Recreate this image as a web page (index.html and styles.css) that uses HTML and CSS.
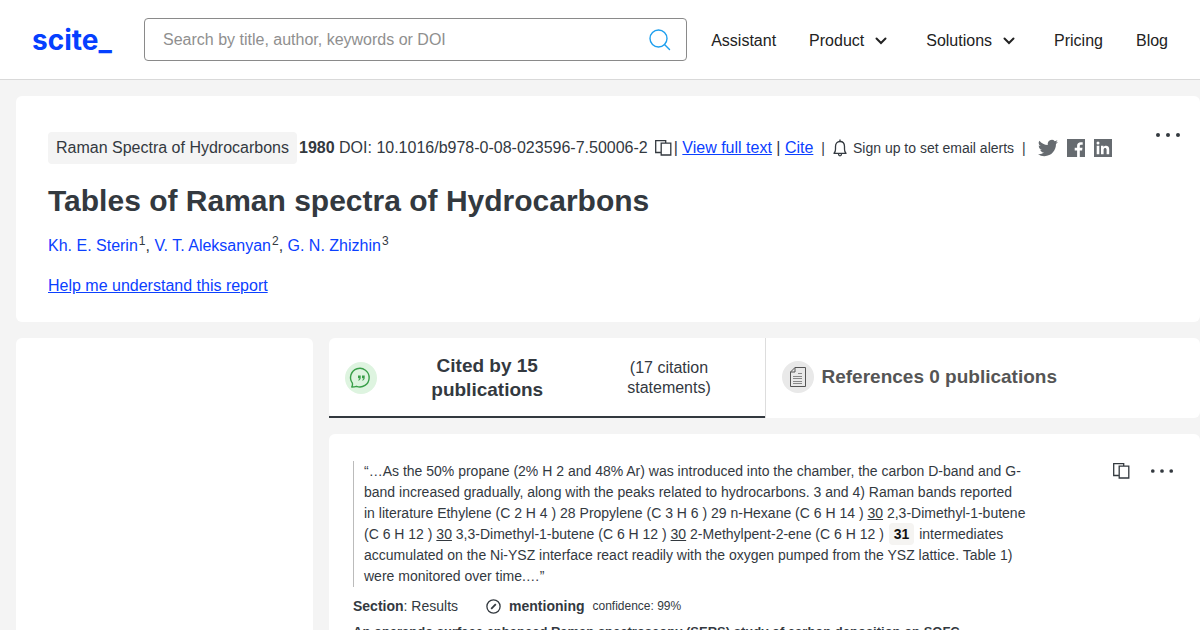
FILE: index.html
```html
<!DOCTYPE html>
<html lang="en">
<head>
<meta charset="utf-8">
<title>Tables of Raman spectra of Hydrocarbons - scite</title>
<link rel="stylesheet" href="styles.css">
</head>
<body>
<svg class="defs" width="0" height="0" aria-hidden="true">
  <symbol id="copy" viewBox="0 0 17 16"><path d="M5.500 12.500H.700V.700h10V3M6.200 3.200h9.600v11.800H6.200z" fill="none" stroke="currentColor" stroke-width="1.300"/></symbol>
  <symbol id="chevron" viewBox="0 0 12 8"><path d="M1.500 1.500 6 6l4.500-4.500" fill="none" stroke="currentColor" stroke-width="2" stroke-linecap="round"/></symbol>
  <symbol id="dots" viewBox="0 0 26 6"><g fill="currentColor"><circle cx="3" cy="3" r="2"/><circle cx="13" cy="3" r="2"/><circle cx="23" cy="3" r="2"/></g></symbol>
</svg>
<header class="header">
  <a class="logo" href="#">scite_</a>
  <form class="search">
    <input class="search-input" type="search" aria-label="Search" placeholder="Search by title, author, keywords or DOI">
    <button class="icon-button search-button" type="button" aria-label="Search"><svg width="22" height="22" viewBox="0 0 22 22" fill="none" stroke="#1e9fee" stroke-width="1.400"><circle cx="9.500" cy="9.500" r="8.500"/><path d="m15.500 15.500 5 5" stroke-linecap="round"/></svg></button>
  </form>
  <nav class="nav">
    <a class="nav-link" href="#">Assistant</a>
    <button class="nav-link nav-menu" type="button">Product<svg width="12" height="8"><use href="#chevron"/></svg></button>
    <button class="nav-link nav-menu" type="button">Solutions<svg width="12" height="8"><use href="#chevron"/></svg></button>
    <a class="nav-link" href="#">Pricing</a>
    <a class="nav-link" href="#">Blog</a>
  </nav>
</header>
<main class="page">
  <section class="card report">
    <div class="report-body">
      <div class="meta">
        <span class="journal">Raman Spectra of Hydrocarbons</span>
        <span class="doi"><b>1980</b> DOI: 10.1016/b978-0-08-023596-7.50006-2</span>
        <button class="icon-button copy-doi" type="button" aria-label="Copy DOI"><svg width="17" height="16"><use href="#copy"/></svg></button>
        <span class="links">| <a href="#">View full text</a> | <a href="#">Cite</a></span>
        <span class="bar">|</span>
        <button class="alerts" type="button"><svg width="14" height="18" viewBox="0 0 14 18" fill="none" stroke="currentColor" stroke-width="1.300"><path d="M1 14.300c1.200-1 1.500-2 1.500-4V7.500c0-3 1.700-5 4.500-5s4.500 2 4.500 5v2.800c0 2 .3 3 1.500 4z" stroke-linejoin="round"/><path d="M7 .6v2M5.500 15c.1 2.400 2.900 2.400 3 0"/></svg>Sign up to set email alerts</button>
        <span class="bar">|</span>
        <span class="social">
          <a href="#" aria-label="Twitter"><svg width="20" height="20" viewBox="0 0 24 24" fill="currentColor"><path d="M23.950 4.570a10 10 0 0 1-2.820.770 4.960 4.960 0 0 0 2.160-2.720c-.950.550-2 .960-3.130 1.180a4.920 4.920 0 0 0-8.380 4.480C7.690 8.090 4.070 6.130 1.640 3.160a4.930 4.930 0 0 0 1.520 6.570 4.900 4.900 0 0 1-2.230-.610v.060a4.920 4.920 0 0 0 3.950 4.830 5 5 0 0 1-2.210.080 4.940 4.940 0 0 0 4.600 3.420A9.870 9.870 0 0 1 0 19.540a13.990 13.990 0 0 0 7.560 2.210c9.050 0 14-7.500 14-13.980 0-.210 0-.420-.020-.630a9.940 9.940 0 0 0 2.410-2.570z"/></svg></a>
          <a href="#" aria-label="Facebook"><svg width="18" height="18" viewBox="0 0 18 18"><path fill="currentColor" d="M0 0h18v18h-5.200v-6.500h2.300l.4-2.700h-2.700V7.200c0-.8.300-1.400 1.500-1.400h1.400V3.300c-.3 0-1.100-.1-2-.1-2.200 0-3.600 1.200-3.600 3.600v2H7.700v2.700h2.400V18H0z"/></svg></a>
          <a href="#" aria-label="LinkedIn"><svg width="18" height="18" viewBox="0 0 18 18"><path fill="currentColor" d="M0 0h18v18H0z"/><path fill="#fff" d="M2.700 6.800h2.600v8.400H2.700zM7 6.800h2.500V8c1.200-2 5.700-2.100 5.700 2v5.200h-2.600v-4.500c0-2.500-3-2.300-3 0v4.500H7z"/><circle cx="4" cy="4" r="1.500" fill="#fff"/></svg></a>
        </span>
      </div>
      <h1 class="title">Tables of Raman spectra of Hydrocarbons</h1>
      <p class="authors"><a href="#">Kh. E. Sterin</a><sup>1</sup>, <a href="#">V. T. Aleksanyan</a><sup>2</sup>, <a href="#">G. N. Zhizhin</a><sup>3</sup></p>
      <a class="help" href="#">Help me understand this report</a>
    </div>
    <button class="icon-button" type="button" aria-label="More options"><svg width="26" height="6"><use href="#dots"/></svg></button>
  </section>
  <div class="columns">
    <aside class="card filters"></aside>
    <div class="results">
      <div class="tabs">
        <button class="tab tab-active" type="button">
          <svg width="32" height="32" viewBox="0 0 32 32"><circle cx="16" cy="16" r="16" fill="#def4e0"/><path d="M6.800 25c.8-1.200 1-2 .6-3.800A9.300 9.300 0 1 1 11.500 24.300c-1.500.5-3 .7-4.700.7z" fill="none" stroke="#389e48" stroke-width="1.400" stroke-linejoin="round"/><g fill="#389e48"><path d="M13 13.500h2.700v2c0 1.800-.7 2.800-2.300 3.200v-1c.7-.3 1-.8 1-1.500H13zM17 13.500h2.700v2c0 1.800-.7 2.800-2.300 3.200v-1c.7-.3 1-.8 1-1.500H17z"/></g></svg>
          <span class="tab-title tab-main">Cited by 15 publications</span>
          <span class="tab-note">(17 citation statements)</span>
        </button>
        <button class="tab tab-refs" type="button">
          <svg width="32" height="32" viewBox="0 0 32 32"><circle cx="16" cy="16" r="16" fill="#e9e9e9"/><path d="M13 6.500h10.500v19h-15V11zM13 6.500V11H8.500" fill="none" stroke="#555"/><path d="M16 12.500h4M11 15.500h9M11 17.500h9M11 20.500h9M11 22.500h9" stroke="#888"/></svg>
          <span class="tab-title">References 0 publications</span>
        </button>
      </div>
      <article class="card citation">
        <div class="citation-body">
          <blockquote class="quote">“…As the 50% propane (2% H 2 and 48% Ar) was introduced into the chamber, the carbon D-band and G-<br>band increased gradually, along with the peaks related to hydrocarbons. 3 and 4) Raman bands reported<br>in literature Ethylene (C 2 H 4 ) 28 Propylene (C 3 H 6 ) 29 n-Hexane (C 6 H 14 ) <u>30</u> 2,3-Dimethyl-1-butene<br>(C 6 H 12 ) <u>30</u> 3,3-Dimethyl-1-butene (C 6 H 12 ) <u>30</u> 2-Methylpent-2-ene (C 6 H 12 ) <b class="ref">31</b> intermediates<br>accumulated on the Ni-YSZ interface react readily with the oxygen pumped from the YSZ lattice. Table 1)<br>were monitored over time.…”</blockquote>
          <div class="facts">
            <span class="section"><b>Section</b>: Results</span>
            <svg width="15" height="15" viewBox="0 0 15 15" fill="none" stroke="currentColor"><circle cx="7.500" cy="7.500" r="6.600" stroke-width="1.300"/><path d="m5.200 9.800 4.600-4.600" stroke-width="1.800"/></svg>
            <b>mentioning</b>
            <small class="confidence">confidence: 99%</small>
          </div>
          <h2 class="paper">An operando surface enhanced Raman spectroscopy (SERS) study of carbon deposition on SOFC</h2>
        </div>
        <div class="citation-tools">
          <button class="icon-button" type="button" aria-label="Copy citation"><svg width="17" height="16"><use href="#copy"/></svg></button>
          <button class="icon-button" type="button" aria-label="More options"><svg width="24" height="6"><use href="#dots"/></svg></button>
        </div>
      </article>
    </div>
  </div>
</main>
</body>
</html>
```
FILE: styles.css
```css
* { box-sizing: border-box; }
body {
  margin: 0;
  height: 100vh;
  overflow: hidden;
  background: #f4f4f4;
  color: #33393f;
  font: 16px/24px "Liberation Sans", Arial, sans-serif;
}
.defs { position: absolute; }
svg { flex: none; display: block; }
a { color: #0b40ff; }
button { font: inherit; color: inherit; background: none; border: 0; padding: 0; cursor: pointer; }
.icon-button { display: flex; flex: none; }

.header {
  display: flex;
  align-items: center;
  height: 80px;
  padding: 0 32px;
  background: #fff;
  border-bottom: 1px solid #d9d9d9;
}
.logo { width: 112px; flex: none; color: #0540ff; font: bold 28px/32px Inter, sans-serif; text-decoration: none; }
.search {
  display: flex;
  align-items: center;
  flex: 1;
  height: 43px;
  padding: 0 15px 0 18px;
  border: 1px solid #8a8a8a;
  border-radius: 4px;
}
.search-input { flex: 1; min-width: 0; border: 0; padding: 0; outline: 0; font: inherit; }
.search-input::placeholder { color: #8f8f8f; }
.nav { display: flex; gap: 33px; margin-left: 24px; padding-top: 2px; }
.nav-link { display: flex; align-items: center; color: #222; text-decoration: none; }
.nav-menu { gap: 11px; padding-right: 6px; }

.page { display: flex; flex-direction: column; gap: 16px; padding: 16px 0 0 16px; }
.card { background: #fff; border-radius: 6px; }
.report { display: flex; align-items: flex-start; justify-content: space-between; padding: 36px 19px 24px 32px; }
.meta { display: flex; align-items: center; white-space: nowrap; }
.journal { padding: 4px 8px; margin-right: 2px; border-radius: 4px; background: #f4f4f4; }
.copy-doi { margin: 0 2px 0 7px; }
.bar { margin: 0 8px; font-size: 14px; }
.alerts { display: flex; align-items: center; gap: 6px; font-size: 14px; }
.social { display: flex; align-items: center; gap: 9px; margin-left: 4px; }
.social a { color: #666b70; }
.title { margin: 16px 0 12px; font-size: 30px; line-height: 42px; }
.authors { margin: 0 0 16px; }
.authors a { text-decoration: none; }
.authors sup { margin-left: 1px; font-size: 12px; line-height: 0; }

.columns { display: grid; grid-template-columns: 297px 1fr; gap: 16px; }
.results { display: flex; flex-direction: column; gap: 16px; }
.tabs { display: grid; grid-template-columns: 1fr 1fr; height: 80px; background: #fff; border-radius: 6px; }
.tab { display: flex; align-items: center; padding: 0 16px; }
.tab-active { justify-content: space-between; padding-top: 2px; border-bottom: 2px solid #33393f; }
.tab-title { font-size: 19px; font-weight: bold; }
.tab-main { width: 120px; margin-right: 24px; }
.tab-note { width: 95px; margin-right: 32px; line-height: 20px; }
.tab-refs { gap: 8px; padding-bottom: 2px; border-left: 1px solid #ddd; color: #555; }

.citation { display: flex; justify-content: space-between; padding: 27px 26px 24px 24px; }
.quote { margin: 0 0 7px; padding-left: 10px; border-left: 1px solid #bbb; font-size: 14px; line-height: 21px; white-space: nowrap; }
.ref { padding: 3px 5px; margin: 0 1px; border-radius: 4px; background: #f5f4f2; color: #111; }
.facts { display: flex; align-items: center; gap: 8px; font-size: 14px; }
.section { margin-right: 20px; }
.confidence { font-size: 12px; }
.paper { margin: 4px 0 0; font-size: 13px; line-height: 20px; }
.citation-tools { display: flex; align-items: center; gap: 20px; height: 20px; }
```
